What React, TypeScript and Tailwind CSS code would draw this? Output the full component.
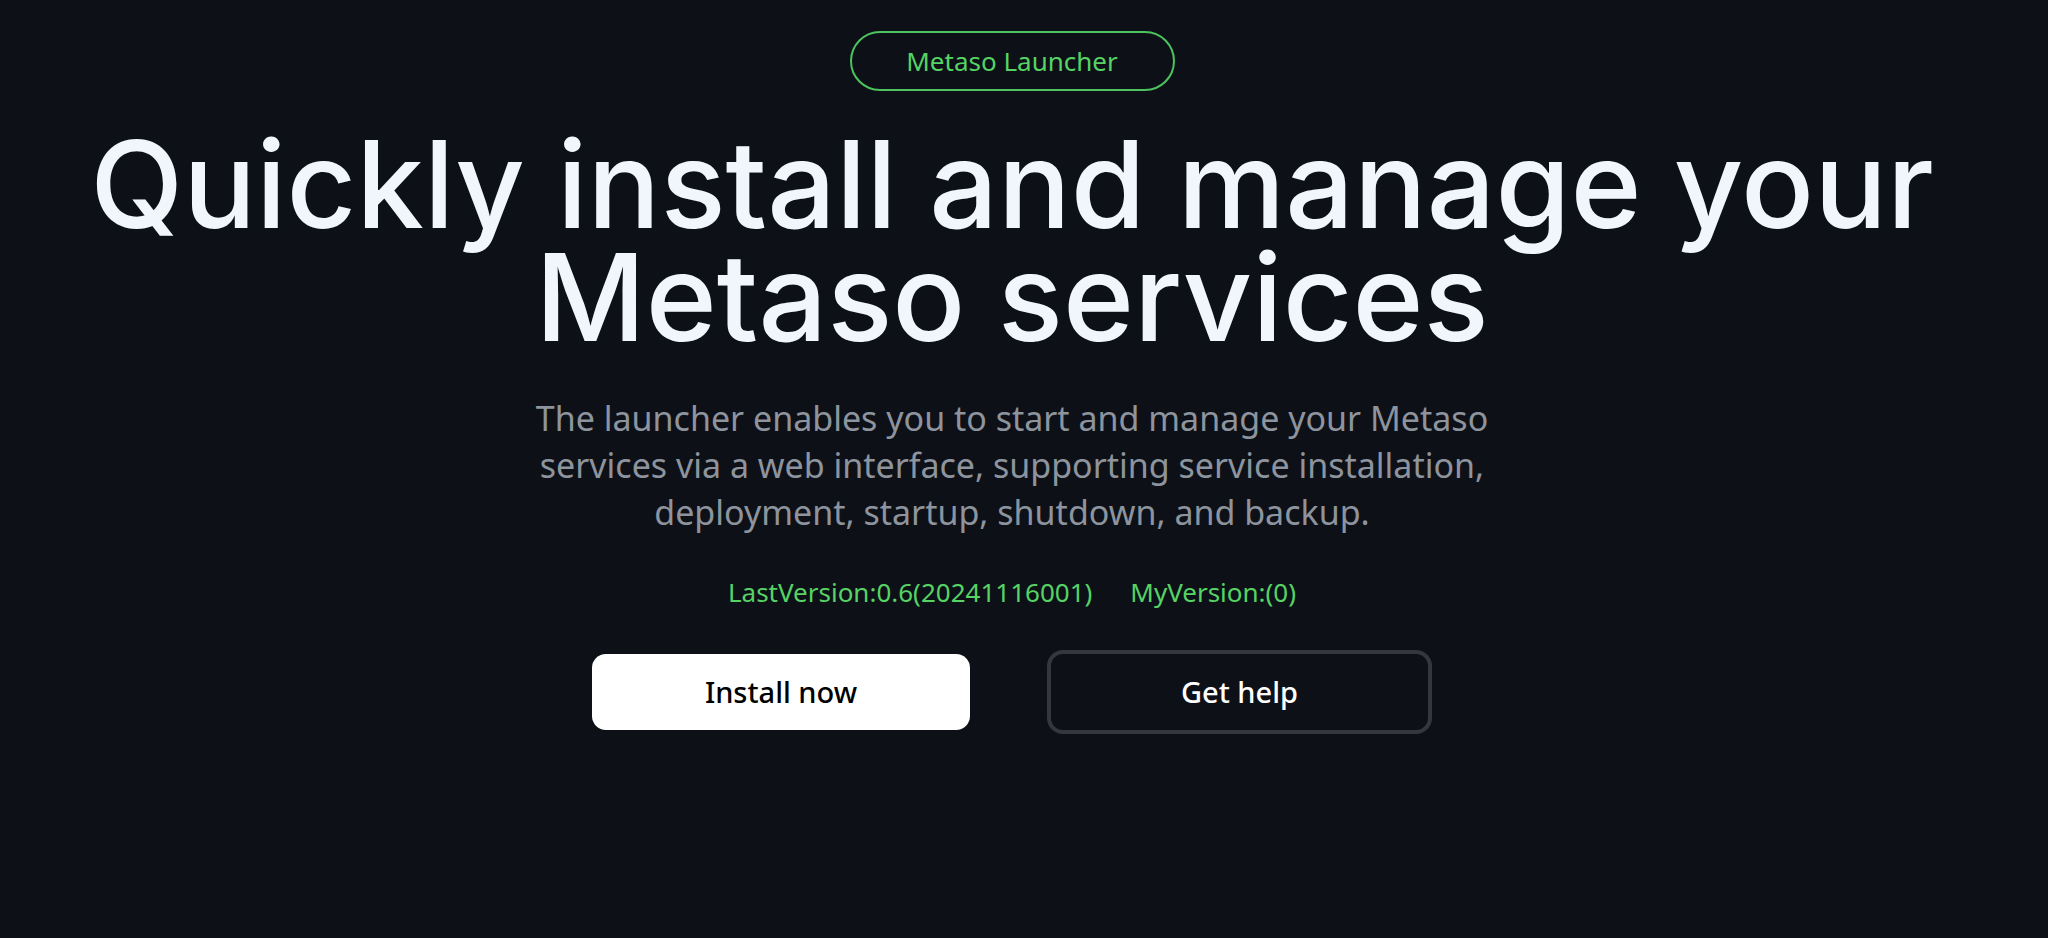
export default function App() {
  return (
    <div className="min-h-screen w-full bg-[#0d1117] font-['Noto_Sans','Liberation_Sans',sans-serif]">
      <main className="flex flex-col items-center pt-[31px] pr-[24px] text-center">
        {/* Badge */}
        <div className="flex h-[60px] w-[325px] items-center justify-center rounded-full border-2 border-[#4cc35e] text-[26px] text-[#56d364]">
          Metaso Launcher
        </div>

        {/* Title */}
        <h1 className="mt-[37px] font-['Inter','Noto_Sans',sans-serif] text-[121px] leading-[113px] font-medium text-[#f0f6fc]">
          Quickly install and manage your
          <br />
          Metaso services
        </h1>

        {/* Description */}
        <p className="mt-[41px] text-[34px] leading-[47px] text-[#8d949e]">
          The launcher enables you to start and manage your Metaso
          <br />
          services via a web interface, supporting service installation,
          <br />
          deployment, startup, shutdown, and backup.
        </p>

        {/* Versions */}
        <div className="mt-[38px] flex items-center gap-[38px] text-[26px] leading-[36px] text-[#56d364]">
          <span>LastVersion:0.6(20241116001)</span>
          <span>MyVersion:(0)</span>
        </div>

        {/* Actions */}
        <div className="mt-[40px] flex items-center gap-[77px]">
          <button className="h-[76px] w-[378px] rounded-[14px] bg-white text-[29px] font-medium text-black">
            Install now
          </button>
          <button className="h-[84px] w-[385px] rounded-[16px] border-4 border-[#34383e] bg-[#0d1117] text-[29px] font-medium text-white">
            Get help
          </button>
        </div>
      </main>
    </div>
  );
}
